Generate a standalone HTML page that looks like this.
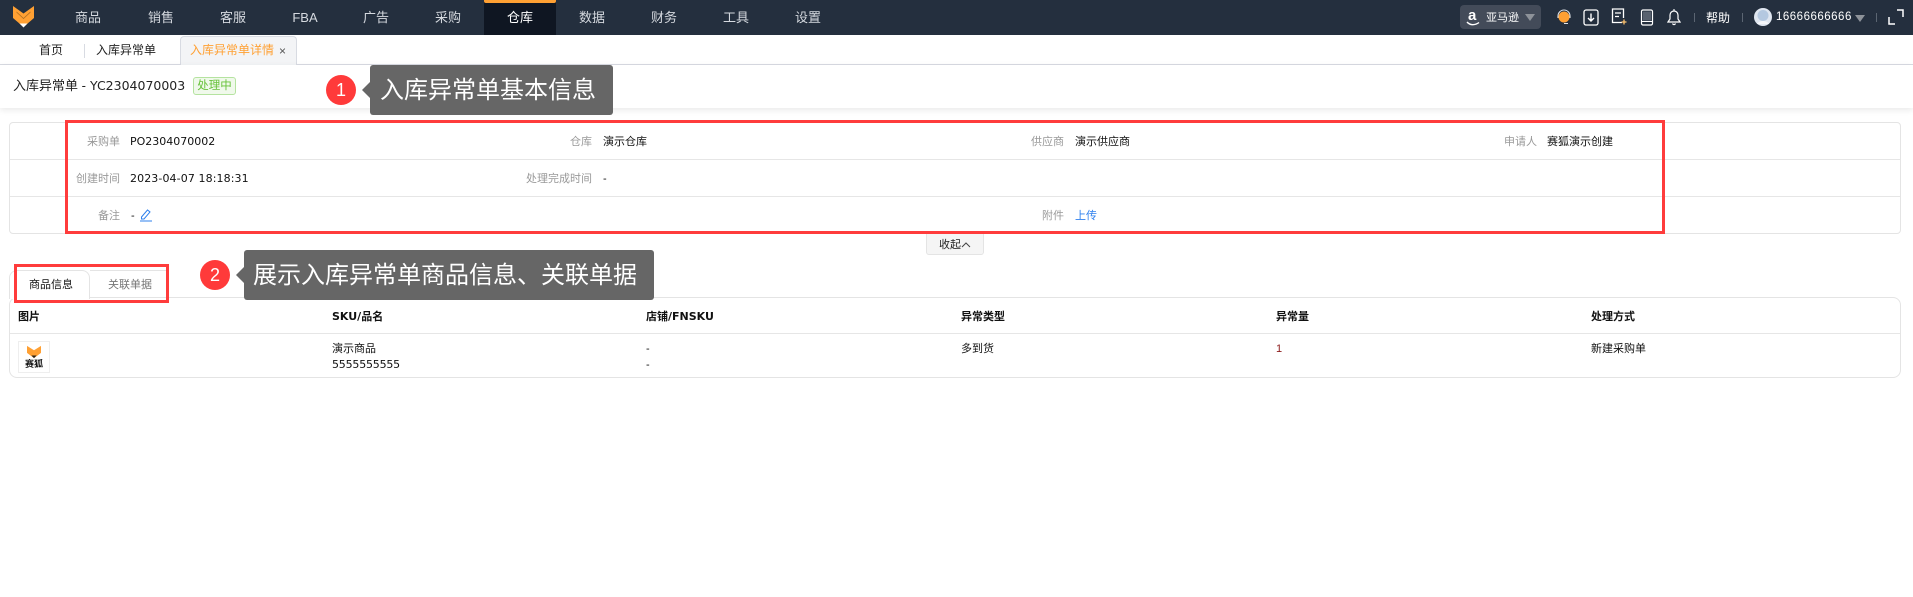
<!DOCTYPE html>
<html lang="zh-CN"><head><meta charset="utf-8"><title>入库异常单详情</title>
<style>
html,body{margin:0;padding:0;background:#fff}
body{width:1913px;height:597px;position:relative;overflow:hidden;font-family:"Liberation Sans","Noto Sans CJK SC",sans-serif;font-size:11px;color:#111}
.a{position:absolute;white-space:nowrap}
.t{position:absolute;white-space:nowrap;line-height:16px;height:16px}
.n{position:absolute;top:0;height:35px;width:72px;line-height:35px;text-align:center;color:#d5d9df;font-size:13px}
.l{position:absolute;white-space:nowrap;text-align:right;width:110px;color:#999;line-height:16px;height:16px}
.d{font-family:"DejaVu Sans","Noto Sans CJK SC",sans-serif}
.th{position:absolute;top:309px;font-weight:700;line-height:16px;white-space:nowrap}
.line{position:absolute;height:1px;background:#e6e6e6}
.red{position:absolute;border:3px solid #ff3c3c;box-sizing:border-box}
.tip{position:absolute;background:#666;color:#fff;height:50px;line-height:52px;font-size:24px;border-radius:3px;box-sizing:border-box;white-space:nowrap}
.tip:before{content:"";position:absolute;left:-8px;top:17px;border:8px solid transparent;border-left:0;border-right-color:#666}
.dot{position:absolute;width:30px;height:30px;border-radius:50%;background:#ff3a3a;color:#fff;text-align:center;line-height:30px;font-size:18px}
</style></head><body>

<!-- top navigation -->
<div class="a" style="left:0;top:0;width:1913px;height:35px;background:#242f3e"></div>
<svg class="a" style="left:12px;top:5px" width="23" height="23" viewBox="0 0 23 23">
<path d="M1 1 L11.5 8.5 L22 1 L22 13 L11.5 22 L1 13 Z" fill="#ffa033"/>
<path d="M4.5 6.5 L11.5 13 L18.5 6.5 L18.5 7.5 L11.5 14 L4.5 7.5Z" fill="#a96b22"/>
<path d="M7.5 18.5 H15.5 L11.5 22.5Z" fill="#fff"/>
</svg>
<div class="a" style="left:484px;top:0;width:72px;height:35px;background:#0f1622"></div>
<div class="a" style="left:484px;top:0;width:72px;height:3px;background:#ffa033;border-radius:0 0 2px 2px"></div>
<div class="n" style="left:52px">商品</div>
<div class="n" style="left:125px">销售</div>
<div class="n" style="left:197px">客服</div>
<div class="n" style="left:269px">FBA</div>
<div class="n" style="left:340px">广告</div>
<div class="n" style="left:412px">采购</div>
<div class="n" style="left:484px;color:#fff">仓库</div>
<div class="n" style="left:556px">数据</div>
<div class="n" style="left:628px">财务</div>
<div class="n" style="left:700px">工具</div>
<div class="n" style="left:772px">设置</div>

<div class="a" style="left:1460px;top:5px;width:81px;height:24px;background:#434b59;border-radius:4px"></div>
<div class="a" style="left:1468px;top:6px;color:#fff;font-size:15px;font-weight:700;line-height:20px">a</div>
<svg class="a" style="left:1466px;top:21px" width="14" height="6" viewBox="0 0 14 6"><path d="M1 1 C4 4.5 9 4.5 13 1.5" fill="none" stroke="#fff" stroke-width="1.4"/></svg>
<div class="t" style="left:1486px;top:10px;color:#fff;font-size:11px">亚马逊</div>
<div class="a" style="left:1525px;top:14px;border:5px solid transparent;border-top:7px solid #8d9299;border-bottom:0"></div>

<svg class="a" style="left:1556px;top:9px" width="16" height="16" viewBox="0 0 16 16"><circle cx="8" cy="8" r="5.5" fill="#ffa033"/><path d="M2 9 V7 A6 6 0 0 1 14 7 V9" fill="none" stroke="#dfe3e8" stroke-width="1.1"/><path d="M8 14.5 H12" stroke="#dfe3e8" stroke-width="1"/></svg>
<svg class="a" style="left:1583px;top:9px" width="16" height="17" viewBox="0 0 16 17"><rect x="1" y="1" width="14" height="15" rx="2" fill="none" stroke="#fff" stroke-width="1.3"/><path d="M8 4.5 V12 M5 9 L8 12 L11 9" fill="none" stroke="#fff" stroke-width="1.4"/></svg>
<svg class="a" style="left:1611px;top:8px" width="16" height="18" viewBox="0 0 16 18"><path d="M11 14.5 H1.5 V1 H12.5 V10" fill="none" stroke="#fff" stroke-width="1.3"/><path d="M4 5 H10 M4 8.5 H8" stroke="#fff" stroke-width="1.2"/><path d="M13 11.5 V16.5 M10.5 14 H15.5" stroke="#ffc36e" stroke-width="1.3"/></svg>
<svg class="a" style="left:1640px;top:9px" width="14" height="17" viewBox="0 0 14 17"><rect x="1.5" y="1" width="11" height="15" rx="1.5" fill="none" stroke="#fff" stroke-width="1.2"/><rect x="3" y="2.5" width="8" height="9" fill="#59626f"/><path d="M1.5 12.5 H12.5" stroke="#fff" stroke-width="1"/></svg>
<svg class="a" style="left:1667px;top:8px" width="14" height="18" viewBox="0 0 14 18"><path d="M1 14 H13 L11 11 V7 A4 4 0 0 0 3 7 V11 Z" fill="none" stroke="#fff" stroke-width="1.2"/><path d="M7 1 V3 M5.5 15.5 A1.6 1.6 0 0 0 8.5 15.5" fill="none" stroke="#fff" stroke-width="1.1"/></svg>
<div class="a" style="left:1694px;top:13px;width:1px;height:9px;background:#5b6572"></div>
<div class="t" style="left:1706px;top:10px;color:#fff;font-size:12px">帮助</div>
<div class="a" style="left:1742px;top:13px;width:1px;height:9px;background:#5b6572"></div>
<svg class="a" style="left:1754px;top:8px" width="18" height="18" viewBox="0 0 18 18"><circle cx="9" cy="9" r="9" fill="#dfe6f0"/><circle cx="9" cy="7.5" r="5.5" fill="#b4c8e0"/><path d="M3 16 C5 12 13 12 15 16" fill="#f4f6fa"/></svg>
<div class="t" style="left:1776px;top:9px;color:#fff;font-size:11.5px;letter-spacing:.5px">16666666666</div>
<div class="a" style="left:1855px;top:15px;border:5px solid transparent;border-top:7px solid #8d9299;border-bottom:0"></div>
<div class="a" style="left:1876px;top:13px;width:1px;height:9px;background:#5b6572"></div>
<svg class="a" style="left:1888px;top:9px" width="16" height="16" viewBox="0 0 16 16"><path d="M1 8 V15 H7 M9 1 H15 V8" fill="none" stroke="#fff" stroke-width="1.5"/></svg>

<!-- tabs -->
<div class="line" style="left:0;top:64px;width:1913px;background:#d8dbe2"></div>
<div class="t" style="left:39px;top:42px;font-size:12px;color:#222">首页</div>
<div class="a" style="left:84px;top:44px;width:1px;height:14px;background:#d8dbe2"></div>
<div class="t" style="left:96px;top:42px;font-size:12px;color:#222">入库异常单</div>
<div class="a" style="left:180px;top:36px;width:117px;height:29px;box-sizing:border-box;background:#f3f4f6;border:1px solid #d8dbe2;border-bottom:0;border-radius:4px 4px 0 0"></div>
<div class="t" style="left:190px;top:42px;font-size:12px;color:#ffa033">入库异常单详情</div>
<div class="t" style="left:279px;top:43px;font-size:12px;color:#555">×</div>

<!-- page header -->
<div class="a" style="left:0;top:65px;width:1913px;height:43px;background:#fff;box-shadow:0 2px 6px rgba(0,0,0,.09)"></div>
<div class="t" style="left:13px;top:78px;font-size:13px;color:#222">入库异常单 -</div>
<div class="t d" style="left:90px;top:78px;font-size:12.5px;color:#222">YC2304070003</div>
<div class="a" style="left:193px;top:77px;width:43px;height:18px;box-sizing:border-box;background:#f0f9eb;border:1px solid #b5e3a0;border-radius:3px;color:#67c23a;font-size:11.5px;line-height:16px;text-align:center">处理中</div>

<!-- info card -->
<div class="a" style="left:9px;top:122px;width:1892px;height:112px;box-sizing:border-box;border:1px solid #e4e4e4;border-radius:4px"></div>
<div class="line" style="left:10px;top:159px;width:1890px"></div>
<div class="line" style="left:10px;top:196px;width:1890px"></div>

<div class="l" style="left:10px;top:134px">采购单</div>
<div class="t d" style="left:130px;top:134px">PO2304070002</div>
<div class="l" style="left:482px;top:134px">仓库</div>
<div class="t" style="left:603px;top:134px">演示仓库</div>
<div class="l" style="left:954px;top:134px">供应商</div>
<div class="t" style="left:1075px;top:134px">演示供应商</div>
<div class="l" style="left:1427px;top:134px">申请人</div>
<div class="t" style="left:1547px;top:134px">赛狐演示创建</div>

<div class="l" style="left:10px;top:171px">创建时间</div>
<div class="t d" style="left:130px;top:171px;letter-spacing:.1px">2023-04-07 18:18:31</div>
<div class="l" style="left:482px;top:171px">处理完成时间</div>
<div class="t" style="left:603px;top:171px">-</div>

<div class="l" style="left:10px;top:208px">备注</div>
<div class="t" style="left:131px;top:208px">-</div>
<svg class="a" style="left:139px;top:208px" width="14" height="14" viewBox="0 0 14 14"><path d="M2.5 9 L8.5 2 L11 4 L5 11 H2.5 Z" fill="none" stroke="#2f80ed" stroke-width="1"/><path d="M1 13 H13" stroke="#2f80ed" stroke-width="1"/></svg>
<div class="l" style="left:954px;top:208px">附件</div>
<div class="t" style="left:1075px;top:208px;color:#2f80ed">上传</div>

<!-- collapse button -->
<div class="a" style="left:926px;top:234px;width:58px;height:21px;box-sizing:border-box;background:#f5f5f5;border:1px solid #e4e4e4;border-top:0;border-radius:0 0 3px 3px;line-height:22px;padding-left:12px;color:#222">收起</div>
<svg class="a" style="left:961px;top:241px" width="10" height="7" viewBox="0 0 10 7"><path d="M1 6 L5 2 L9 6" fill="none" stroke="#444" stroke-width="1"/></svg>

<!-- product table -->
<div class="a" style="left:9px;top:297px;width:1892px;height:81px;box-sizing:border-box;border:1px solid #e4e4e4;border-radius:8px"></div>
<div class="a" style="left:9px;top:270px;width:81px;height:29px;box-sizing:border-box;background:#fff;border:1px solid #e4e4e4;border-bottom:0;border-radius:8px 8px 0 0"></div>
<div class="a" style="left:90px;top:270px;width:78px;height:27px;box-sizing:border-box;background:#fff;border-top:1px solid #e4e4e4"></div>
<div class="t" style="left:29px;top:277px">商品信息</div>
<div class="t" style="left:108px;top:277px;color:#777">关联单据</div>
<div class="line" style="left:10px;top:333px;width:1890px"></div>

<div class="th" style="left:18px">图片</div>
<div class="th d" style="left:332px">SKU/品名</div>
<div class="th d" style="left:646px">店铺/FNSKU</div>
<div class="th" style="left:961px">异常类型</div>
<div class="th" style="left:1276px">异常量</div>
<div class="th" style="left:1591px">处理方式</div>

<div class="a" style="left:18px;top:341px;width:32px;height:32px;box-sizing:border-box;border:1px solid #eee"></div>
<svg class="a" style="left:26px;top:345px" width="16" height="14" viewBox="0 0 18 16"><path d="M1 1 L9 6 L17 1 L17 9 L9 15 L1 9 Z" fill="#ffa033"/><path d="M6 12 H12 L9 15Z" fill="#222"/></svg>
<div class="t" style="left:25px;top:357px;width:20px;font-size:9px;font-weight:700;line-height:14px;height:14px">赛狐</div>

<div class="t" style="left:332px;top:341px">演示商品</div>
<div class="t d" style="left:332px;top:357px;letter-spacing:-.2px">5555555555</div>
<div class="t" style="left:646px;top:341px">-</div>
<div class="t" style="left:646px;top:357px">-</div>
<div class="t" style="left:961px;top:341px">多到货</div>
<div class="t" style="left:1276px;top:341px;color:#8c1a1a">1</div>
<div class="t" style="left:1591px;top:341px">新建采购单</div>

<!-- annotations -->
<div class="red" style="left:65px;top:120px;width:1600px;height:114px"></div>
<div class="red" style="left:14px;top:264px;width:155px;height:39px"></div>
<div class="dot" style="left:326px;top:75px">1</div>
<div class="tip" style="left:370px;top:65px;width:243px;padding-left:10px">入库异常单基本信息</div>
<div class="dot" style="left:200px;top:260px">2</div>
<div class="tip" style="left:244px;top:250px;width:410px;padding-left:9px">展示入库异常单商品信息、关联单据</div>
</body></html>
